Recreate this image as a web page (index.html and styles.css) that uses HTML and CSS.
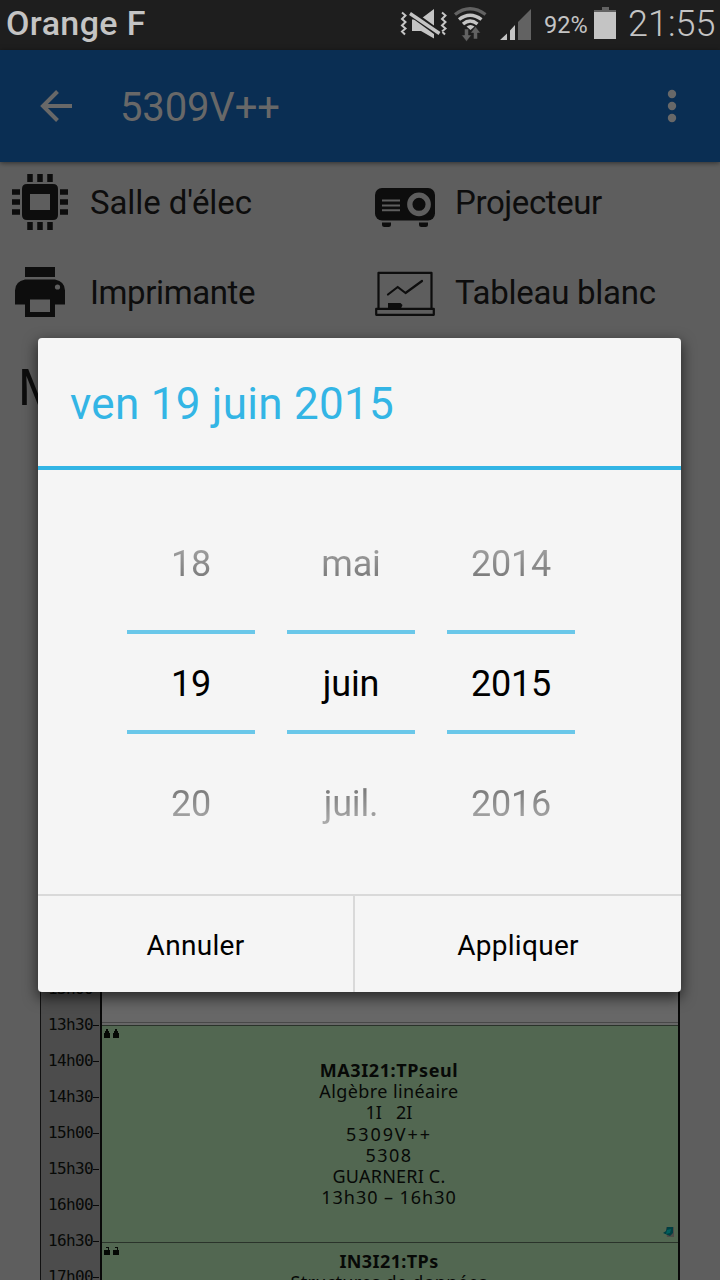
FILE: index.html
```html
<!DOCTYPE html>
<html lang="fr">
<head>
<meta charset="utf-8">
<title>5309V++</title>
<link rel="stylesheet" href="styles.css">
</head>
<body>
<div class="screen">
  <header class="status">
    <span class="carrier">Orange F</span>
    <svg class="status-icons" width="142" height="50" viewBox="0 0 142 50">
      <g fill="none" stroke="#c4c4c4" stroke-width="2">
        <path d="M2 12.500l3.500 3-3.500 3.500 3.500 3-3.500 3.500 3.500 3-3.500 3 3 3M42 12.500l3.500 3-3.500 3.500 3.500 3-3.500 3.500 3.500 3-3.500 3 3 3"/>
      </g>
      <path fill="#c4c4c4" d="M12 19.500h8l14-10.500v29.500l-13-7.500h-9z"/>
      <path stroke="#1e1e1e" stroke-width="7" d="M9.500 12l31 22.500"/>
      <path stroke="#c4c4c4" stroke-width="3.400" d="M10 13.500l29.500 20"/>
      <g fill="none" stroke="#c4c4c4" stroke-width="3.400">
        <path stroke="#626262" d="M55 14.500q15-11.500 30.500 0"/>
        <path d="M59 19.500q11-8.500 22.500 0M63 24q7-6 14.500 0"/>
      </g>
      <path fill="#c4c4c4" d="M66.500 26.500q4-3 8 0l-4 3.500z"/>
      <path fill="#626262" stroke="#1e1e1e" stroke-width=".5" d="M64.500 29h4v6h3l-5 6.500-5-6.500h3zM73.500 39v-6h-3l5-6.500 5 6.500h-3v6z"/>
      <path fill="#c4c4c4" d="M100 40l7-6.500V40zM110 30.500l5-5.500v15h-5z"/>
      <path fill="#626262" d="M118 22L131 9v31h-13z"/>
    </svg>
    <span class="percent">92%</span>
    <span class="battery"></span>
    <span class="clock">21:55</span>
  </header>

  <nav class="appbar">
    <svg class="back" width="32" height="32" viewBox="0 0 32 32"><path fill="none" stroke="#686868" stroke-width="4" d="M32 16H4M17.500 1.500L3 16l14.500 14.500"/></svg>
    <h1 class="room">5309V++</h1>
    <svg class="more" width="10" height="34" viewBox="0 0 10 34"><g fill="#686868"><circle cx="5" cy="5" r="4.200"/><circle cx="5" cy="17" r="4.200"/><circle cx="5" cy="29" r="4.200"/></g></svg>
  </nav>

  <main class="content">
    <ul class="amenities">
      <li class="amenity">
        <svg width="60" height="60" viewBox="0 0 60 60">
          <path fill="#0d0d0d" fill-rule="evenodd" d="M17 12h26q5 0 5 5v26q0 5-5 5H17q-5 0-5-5V17q0-5 5-5zM20 22v16h20V22z"/>
          <path fill="none" stroke="#0d0d0d" stroke-width="5.500" d="M20 2v8M30 2v8M40 2v8M20 50v8M30 50v8M40 50v8M2 20h8M2 30h8M2 40h8M50 20h8M50 30h8M50 40h8"/>
        </svg>
        <span class="label salle">Salle d'élec</span>
      </li>
      <li class="amenity">
        <svg width="60" height="60" viewBox="0 0 60 60">
          <rect y="16" width="60" height="32.500" rx="7" fill="#0d0d0d"/>
          <path fill="#0d0d0d" d="M7 50.500h9v2q0 2.500-2.500 2.500h-4q-2.500 0-2.500-2.500zM44 50.500h9v2q0 2.500-2.500 2.500h-4q-2.500 0-2.500-2.500z"/>
          <path stroke="#5e5e5e" stroke-width="2" d="M7 28.500h18M7 33.500h18M7 38.200h18"/>
          <circle cx="44" cy="32.300" r="9.200" fill="none" stroke="#5e5e5e" stroke-width="5.300"/>
        </svg>
        <span class="label projecteur">Projecteur</span>
      </li>
      <li class="amenity">
        <svg width="60" height="60" viewBox="0 0 60 60">
          <path fill="#0d0d0d" d="M15 5h30v10H15z"/>
          <path fill="#0d0d0d" fill-rule="evenodd" d="M15 17.500h30q10 2 10 11V42.500H45V55H15V42.500H5V28.500q0-9 10-11zM20 37.500V50h20V37.500z"/>
          <circle cx="47.500" cy="25" r="2.600" fill="#5e5e5e"/>
        </svg>
        <span class="label imprimante">Imprimante</span>
      </li>
      <li class="amenity">
        <svg width="60" height="60" viewBox="0 0 60 60">
          <g fill="none" stroke="#0d0d0d" stroke-width="2.200" stroke-linejoin="round" stroke-linecap="round">
            <path d="M3.500 46V10.800h53V46"/><path d="M1.200 46.800h57.600v6H1.200z"/><path d="M13 32.500l9.700-7.500 7.800 6L47 19"/>
          </g>
          <path fill="#0d0d0d" d="M13 41h12.500l2 2-1.500 3.500H13z"/>
        </svg>
        <span class="label tableau">Tableau blanc</span>
      </li>
    </ul>
    <h2 class="heading">M</h2>
    <section class="timetable">
      <div class="hours">
        <span>13h00</span><span>13h30</span><span>14h00</span><span>14h30</span><span>15h00</span><span>15h30</span><span>16h00</span><span>16h30</span><span>17h00</span>
      </div>
      <div class="day">
        <article class="course first">
          <svg class="locks" width="16" height="10" viewBox="0 0 16 10"><path fill="#050805" d="M0 4h6v5H0zM1 2h4v2H1zM2 0h2v2H2zM9 4h6v5H9zM10 2h4v2h-4zM11 0h2v2h-2z"/></svg>
          <p class="code">MA3I21:TPseul</p>
          <p class="subject">Algèbre linéaire</p>
          <p class="groups">1I&nbsp;&nbsp; 2I</p>
          <p class="place">5309V++</p>
          <p class="other">5308</p>
          <p class="teacher">GUARNERI C.</p>
          <p class="range">13h30 – 16h30</p>
          <svg class="note" width="11" height="12" viewBox="0 0 11 12"><path fill="#4d4b47" d="M3 1h8v10H4z"/><path fill="#003f42" d="M4 1h6v6L7 10 0 7l3-2z"/><path fill="#00605f" d="M4 4l4-1-1 4-4 1z"/></svg>
        </article>
        <article class="course last">
          <svg class="locks" width="16" height="10" viewBox="0 0 16 10"><path fill="#050805" d="M0 4h6v5H0zM2 1h3v3H4V2H2zM9 4h6v5H9zM11 1h3v3h-1V2h-2z"/></svg>
          <p class="code second">IN3I21:TPs</p>
          <p class="structures">Structures de données</p>
        </article>
      </div>
    </section>
  </main>

  <section class="dialog">
    <h2 class="dialog-title">ven 19 juin 2015</h2>
    <div class="pickers">
      <div class="picker"><span class="prev">18</span><span class="current">19</span><span class="next">20</span></div>
      <div class="picker"><span class="prev">mai</span><span class="current">juin</span><span class="next">juil.</span></div>
      <div class="picker"><span class="prev">2014</span><span class="current">2015</span><span class="next">2016</span></div>
    </div>
    <div class="actions">
      <button class="action">Annuler</button>
      <button class="action">Appliquer</button>
    </div>
  </section>
</div>
</body>
</html>
```

FILE: styles.css
```css
* { box-sizing: border-box; margin: 0; padding: 0; }
body { background: #5e5e5e; font-family: Roboto, sans-serif; }
.screen { position: relative; width: 720px; height: 1280px; overflow: hidden; background: #5e5e5e; display: flex; flex-direction: column; white-space: nowrap; }

.status { height: 50px; flex: none; background: #1e1e1e; color: #c4c4c4; display: flex; align-items: center; padding-left: 6px; }
.carrier { width: 394px; font-size: 34px; font-weight: 500; letter-spacing: .4px; line-height: 44px; padding-bottom: 5px; }
.status-icons { flex: none; }
.percent { width: 52px; padding-left: 2px; font-size: 23.500px; }
.battery { width: 22px; height: 32px; flex: none; background: linear-gradient(#626262, #626262) 8px 0 / 7px 3px no-repeat, linear-gradient(#626262, #626262) 0 3px / 22px 2px no-repeat, linear-gradient(#c4c4c4, #c4c4c4) 0 5px / 22px 27px no-repeat; margin-top: -4px; }
.clock { margin-left: 12px; font-size: 36px; font-weight: 300; line-height: 46px; padding-bottom: 3px; }

.appbar { height: 112px; flex: none; background: #0a2e53; color: #686868; display: flex; align-items: center; padding: 0 43px 0 40px; box-shadow: 0 1px 5px rgba(0, 0, 0, .5); z-index: 1; }
.room { margin-left: 48px; flex: 1; font-size: 40px; font-weight: 400; letter-spacing: -.15px; padding-top: 2px; }

.content { flex: none; }
.amenities { list-style: none; display: grid; grid-template-columns: 365px 1fr; grid-auto-rows: 90px; padding: 0 0 0 10px; margin-top: -5px; }
.amenity { display: flex; align-items: center; gap: 20px; color: #0d0d0d; font-size: 33px; }
.label { padding-top: 1px; }
.salle { letter-spacing: -.1px; }
.projecteur, .imprimante { letter-spacing: -.4px; }
.tableau { letter-spacing: -.27px; }
.heading { font-size: 50px; line-height: 60px; font-weight: 400; color: #0d0d0d; padding: 21px 18px; height: 638px; }
.timetable { display: flex; width: 640px; margin-left: 40px; height: 305px; border-left: 1px solid #111; border-right: 2px solid #080808; color: #070907; }
.hours { width: 61px; background: #4c4c4c; border-right: 2px solid #080808; overflow: hidden; }
.hours span { display: flex; align-items: center; height: 36px; padding-left: 7px; font: 16px/36px "DejaVu Sans Mono", monospace; letter-spacing: -.65px; }
.hours span:first-child { margin-top: -4px; }
.hours span::after { content: ""; width: 6px; height: 1px; background: #080808; }
.day { flex: 1; padding-top: 49px; background: #676767; }
.course { position: relative; height: 217px; background: #526751; border-top: 1px solid #2a332a; text-align: center; font: 18px/21.200px "Noto Sans", sans-serif; padding: 8px 2px 0 0; }
.first { padding-top: 34px; box-shadow: 0 -2px 0 #676767, 0 -3px 0 #484848; margin-top: 1px; }
.last { height: 38px; }
.locks { position: absolute; left: 2px; top: 3px; }
.note { position: absolute; right: 4px; bottom: 4px; }
.code { font-weight: 700; letter-spacing: .6px; }
.second { letter-spacing: .4px; }
.subject { letter-spacing: .4px; }
.place { letter-spacing: 1.9px; }
.other { letter-spacing: 1.4px; }
.teacher { letter-spacing: .2px; }
.range { letter-spacing: .95px; }
.structures { letter-spacing: .3px; }

.dialog { position: absolute; left: 38px; top: 338px; width: 643px; height: 654px; z-index: 2; background: #f5f5f5; border-radius: 4px; box-shadow: 0 5px 14px 1px rgba(0, 0, 0, .6); display: flex; flex-direction: column; overflow: hidden; }
.dialog-title { height: 132px; flex: none; border-bottom: 4px solid #33b5e5; color: #33b5e5; font-size: 44px; font-weight: 400; letter-spacing: .27px; line-height: 132px; padding-left: 32px; }
.pickers { flex: 1; display: flex; justify-content: center; gap: 32px; padding: 34px 17px 0 0; }
.picker { width: 128px; display: grid; grid-template-rows: 126px 104px 126px; font-size: 36px; letter-spacing: -.2px; text-align: center; color: #000; }
.picker span { line-height: 120px; }
.picker .current { line-height: 100px; border: solid #6ac7e9; border-width: 4px 0; height: 104px; }
.picker .next { line-height: 140px; }
.prev, .next { color: transparent; background-clip: text; -webkit-background-clip: text; }
.prev { background-image: linear-gradient(#c8c8c8 10px, #747474 80px); }
.next { background-image: linear-gradient(#747474 50px, #c8c8c8 110px); }
.actions { height: 98px; flex: none; display: flex; border-top: 2px solid #d9d9d9; }
.action { flex: 1; border: 0; background: none; font: 28px Roboto, sans-serif; letter-spacing: .3px; color: #000; padding-top: 2px; }
.action + .action { flex: none; width: 328px; border-left: 2px solid #d9d9d9; }
```
